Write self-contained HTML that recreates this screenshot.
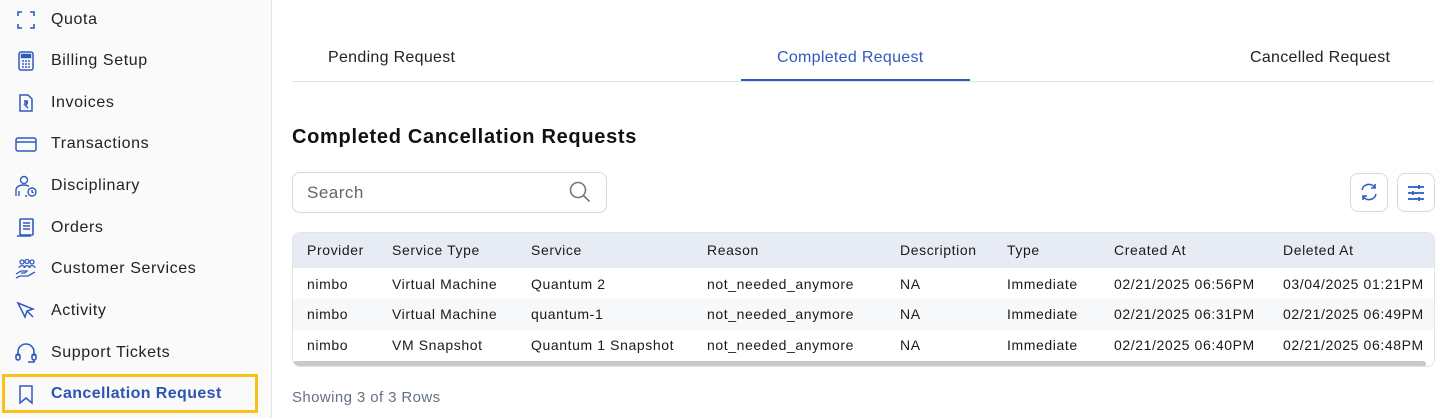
<!DOCTYPE html>
<html><head><meta charset="utf-8"><style>
*{box-sizing:border-box;margin:0;padding:0}
body{width:1438px;height:418px;overflow:hidden;background:#fff;font-family:"Liberation Sans",sans-serif;color:#1a1a1a;position:relative}
.side{position:absolute;left:0;top:0;width:272px;height:418px;background:#fafafa;border-right:1px solid #e6e6e6}
.item{position:absolute;left:0;height:40px;display:flex;align-items:center;font-size:16px;letter-spacing:0.6px;color:#222}
.item svg{position:absolute;left:15px;width:22px;height:22px}
.item span{position:absolute;left:51px;white-space:nowrap}
.hl{position:absolute;left:2px;top:374px;width:256px;height:39px;border:3px solid #f7c21a}
.tab{position:absolute;top:49px;font-size:16px;letter-spacing:0.3px;color:#222}
.abs{position:absolute}
.cell{position:absolute;font-size:14px;letter-spacing:0.6px;white-space:nowrap}
</style></head><body>
<div class="side">
<div class="item" style="top:0"><svg viewBox="0 0 22 22" fill="none" stroke="#2f5bbf" stroke-width="1.6"><path d="M3 7V3h4M15 3h4v4M19 15v4h-4M7 19H3v-4"/></svg><span>Quota</span></div>
<div class="item" style="top:41px"><svg viewBox="0 0 22 22" fill="none" stroke="#2f5bbf" stroke-width="1.5"><rect x="4" y="2" width="14" height="18" rx="2"/><rect x="6.5" y="4.5" width="9" height="3" fill="#2f5bbf"/><path d="M7 11h2M10 11h2M13 11h2M7 14h2M10 14h2M13 14h2M7 17h2M10 17h2M13 17h2"/></svg><span>Billing Setup</span></div>
<div class="item" style="top:83px"><svg viewBox="0 0 22 22" fill="none" stroke="#2f5bbf" stroke-width="1.5"><path d="M5 3h8l4 4v12H5z"/><path d="M9 9h4M9 11h4M10 9c3 0 3 4 0 4l3 3"/></svg><span>Invoices</span></div>
<div class="item" style="top:124px"><svg viewBox="0 0 22 22" fill="none" stroke="#2f5bbf" stroke-width="1.5"><rect x="1" y="5" width="20" height="13" rx="2"/><path d="M1 9h20"/></svg><span>Transactions</span></div>
<div class="item" style="top:166px"><svg viewBox="0 0 22 22" fill="none" stroke="#2f5bbf" stroke-width="1.4"><circle cx="9" cy="5" r="3.5"/><path d="M1 21v-6c0-3 3-5 8-5 2 0 4 .5 5 1.5M4 21v-5M10 21h2"/><circle cx="17" cy="17" r="4"/><path d="M17 15v2l1.5 1"/></svg><span>Disciplinary</span></div>
<div class="item" style="top:208px"><svg viewBox="0 0 22 22" fill="none" stroke="#2f5bbf" stroke-width="1.6"><rect x="5" y="2" width="13" height="16" rx="1"/><path d="M8 6h7M8 9h7M8 12h7M2 19h14" /></svg><span>Orders</span></div>
<div class="item" style="top:249px"><svg viewBox="0 0 22 22" fill="none" stroke="#2f5bbf" stroke-width="1.3"><circle cx="7" cy="4" r="2"/><circle cx="12" cy="3.5" r="2"/><circle cx="17" cy="4" r="2"/><path d="M4 10c0-3 6-3 6 0M9 10c0-3 6-3 6 0M14 10c0-3 6-3 6 0M1 16l5-3h6l-2 2h-4M1 20l4-2h8l7-4"/></svg><span>Customer Services</span></div>
<div class="item" style="top:291px"><svg viewBox="0 0 22 22" fill="none" stroke="#2f5bbf" stroke-width="1.5"><path d="M3 3l15 6-6 2-2 6z M12 11l6 6"/></svg><span>Activity</span></div>
<div class="item" style="top:333px"><svg viewBox="0 0 22 22" fill="none" stroke="#2f5bbf" stroke-width="1.6"><path d="M3 14v-4a8 8 0 0 1 16 0v4"/><rect x="1" y="12" width="4" height="6" rx="2"/><rect x="17" y="12" width="4" height="6" rx="2"/><path d="M19 18v2h-6"/></svg><span>Support Tickets</span></div>
<div class="item" style="top:374px;font-weight:bold;color:#2c55b3;letter-spacing:0.4px"><svg viewBox="0 0 22 22" fill="none" stroke="#2f5bbf" stroke-width="1.5"><path d="M5 3h12v17l-6-5-6 5z"/></svg><span>Cancellation Request</span></div>
<div class="hl"></div>
</div>

<div class="tab" style="left:328px">Pending Request</div>
<div class="tab" style="left:777px;color:#2f5bbf">Completed Request</div>
<div class="tab" style="left:1250px">Cancelled Request</div>
<div class="abs" style="left:292px;top:81px;width:1142px;height:1px;background:#e3e3e3"></div>
<div class="abs" style="left:741px;top:79px;width:229px;height:2px;background:#2f5bbf"></div>

<div class="abs" style="left:292px;top:126px;font-size:20px;letter-spacing:0.7px;font-weight:bold;color:#111">Completed Cancellation Requests</div>

<div class="abs" style="left:292px;top:172px;width:315px;height:41px;border:1px solid #d8d8d8;border-radius:8px"></div>
<div class="abs" style="left:307px;top:183px;font-size:17px;letter-spacing:0.5px;color:#666">Search</div>
<svg class="abs" style="left:568px;top:180px" width="25" height="25" viewBox="0 0 25 25" fill="none" stroke="#777" stroke-width="1.6"><circle cx="10" cy="10" r="7.5"/><path d="M15.5 15.5l6 6"/></svg>

<div class="abs" style="left:1350px;top:173px;width:38px;height:39px;border:1px solid #d8d8d8;border-radius:8px"></div>
<svg class="abs" style="left:1359px;top:182px" width="20" height="20" viewBox="0 0 20 20" fill="none" stroke="#2f5bbf" stroke-width="1.6"><path d="M3 8a7 7 0 0 1 13-2M17 12a7 7 0 0 1-13 2"/><path d="M16 2v4h-4M4 18v-4h4"/></svg>
<div class="abs" style="left:1397px;top:173px;width:38px;height:39px;border:1px solid #d8d8d8;border-radius:8px"></div>
<svg class="abs" style="left:1406px;top:183px" width="20" height="20" viewBox="0 0 20 20" fill="none" stroke="#2f5bbf" stroke-width="1.8"><path d="M2 4h16M2 10h16M2 16h16"/><path d="M13 2v4M7 8v4M13 14v4"/></svg>

<div class="abs" style="left:292px;top:232px;width:1143px;height:135px;border:1px solid #e0e4ea;border-radius:8px;overflow:hidden">
<div style="height:35px;background:#e7ebf3"></div>
<div style="height:31px;background:#fff"></div>
<div style="height:31px;background:#f7f8fa"></div>
<div style="height:31px;background:#fff"></div>
<div style="height:6px;background:#c9c9c9;margin-right:8px;border-radius:3px"></div>
</div>
<div class="cell" style="left:307px;top:242px">Provider</div><div class="cell" style="left:392px;top:242px">Service Type</div><div class="cell" style="left:531px;top:242px">Service</div><div class="cell" style="left:707px;top:242px">Reason</div><div class="cell" style="left:900px;top:242px">Description</div><div class="cell" style="left:1007px;top:242px">Type</div><div class="cell" style="left:1114px;top:242px">Created At</div><div class="cell" style="left:1283px;top:242px">Deleted At</div>

<div class="cell" style="left:307px;top:276px">nimbo</div><div class="cell" style="left:392px;top:276px">Virtual Machine</div><div class="cell" style="left:531px;top:276px">Quantum 2</div><div class="cell" style="left:707px;top:276px">not_needed_anymore</div><div class="cell" style="left:900px;top:276px">NA</div><div class="cell" style="left:1007px;top:276px">Immediate</div><div class="cell" style="left:1114px;top:276px">02/21/2025 06:56PM</div><div class="cell" style="left:1283px;top:276px">03/04/2025 01:21PM</div>

<div class="cell" style="left:307px;top:306px">nimbo</div><div class="cell" style="left:392px;top:306px">Virtual Machine</div><div class="cell" style="left:531px;top:306px">quantum-1</div><div class="cell" style="left:707px;top:306px">not_needed_anymore</div><div class="cell" style="left:900px;top:306px">NA</div><div class="cell" style="left:1007px;top:306px">Immediate</div><div class="cell" style="left:1114px;top:306px">02/21/2025 06:31PM</div><div class="cell" style="left:1283px;top:306px">02/21/2025 06:49PM</div>

<div class="cell" style="left:307px;top:337px">nimbo</div><div class="cell" style="left:392px;top:337px">VM Snapshot</div><div class="cell" style="left:531px;top:337px">Quantum 1 Snapshot</div><div class="cell" style="left:707px;top:337px">not_needed_anymore</div><div class="cell" style="left:900px;top:337px">NA</div><div class="cell" style="left:1007px;top:337px">Immediate</div><div class="cell" style="left:1114px;top:337px">02/21/2025 06:40PM</div><div class="cell" style="left:1283px;top:337px">02/21/2025 06:48PM</div>

<div class="abs" style="left:292px;top:389px;font-size:15px;letter-spacing:0.4px;color:#667085">Showing 3 of 3 Rows</div>
</body></html>
